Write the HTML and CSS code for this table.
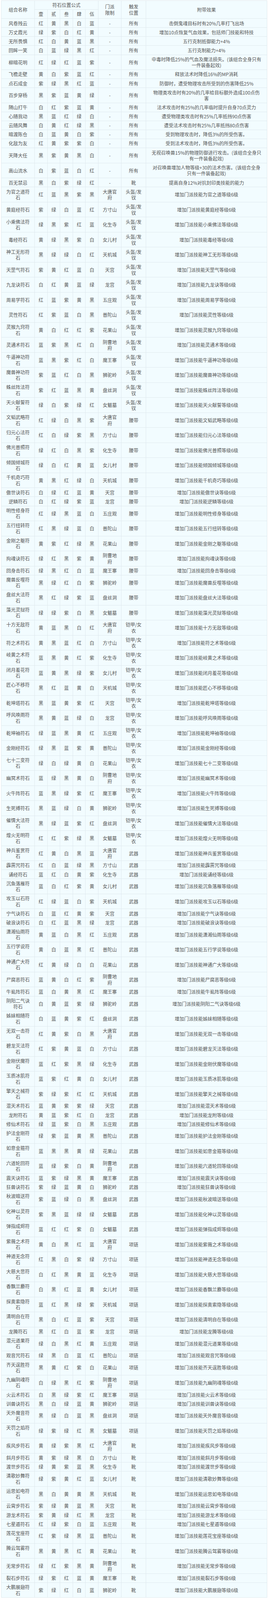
FILE: index.html
```html
<!DOCTYPE html>
<html lang="zh-CN">
<head>
<meta charset="utf-8">
<title>符石组合</title>
<link rel="stylesheet" href="styles.css">
</head>
<body>
<div class="wrap">
<table class="rune">
<colgroup>
<col class="c-name"><col class="c-pos"><col class="c-pos"><col class="c-pos"><col class="c-pos"><col class="c-pos"><col class="c-sect"><col class="c-trig"><col class="c-eff">
</colgroup>
<thead>
<tr><th rowspan="2" class="name">组合名称</th><th colspan="5">符石位置公式</th><th rowspan="2" class="sect">门派<br>限制</th><th rowspan="2" class="trig">触发<br>位置</th><th rowspan="2" class="eff">附带效果</th></tr>
<tr><th>壹</th><th>贰</th><th>叁</th><th>肆</th><th>伍</th></tr>
</thead>
<tbody>
<tr><td class="name">风卷残云</td><td>红</td><td>黄</td><td>黑</td><td>白</td><td>蓝</td><td class="sect">-</td><td class="trig">所有</td><td class="eff">击倒鬼魂目标时有20%几率打飞出场</td></tr>
<tr><td class="name">万丈霞光</td><td>绿</td><td>紫</td><td>白</td><td>红</td><td>黄</td><td class="sect">-</td><td class="trig">所有</td><td class="eff">增加10点恢复气血效果，包括师门技能和特技</td></tr>
<tr><td class="name">无所畏惧</td><td>红</td><td>白</td><td>黄</td><td>蓝</td><td>黑</td><td class="sect">-</td><td class="trig">所有</td><td class="eff">五行克制抵御能力+4%</td></tr>
<tr><td class="name">回眸一笑</td><td>白</td><td>蓝</td><td>绿</td><td>黑</td><td>红</td><td class="sect">-</td><td class="trig">所有</td><td class="eff">五行克制能力+4%</td></tr>
<tr><td class="name">柳暗花明</td><td>红</td><td>绿</td><td>红</td><td>蓝</td><td>紫</td><td class="sect">-</td><td class="trig">所有</td><td class="eff">中毒时降低25%的气血及魔法损失。(该组合全身只有一件装备起效)</td></tr>
<tr><td class="name">飞檐走壁</td><td>黄</td><td>白</td><td>紫</td><td>蓝</td><td>红</td><td class="sect">-</td><td class="trig">所有</td><td class="eff">释放法术时降低16%的MP消耗</td></tr>
<tr><td class="name">点石成金</td><td>紫</td><td>绿</td><td>黑</td><td>红</td><td>蓝</td><td class="sect">-</td><td class="trig">所有</td><td class="eff">防御时，遭受物理攻击所受到的伤害降低25%</td></tr>
<tr><td class="name">百步穿杨</td><td>黑</td><td>紫</td><td>蓝</td><td>黄</td><td>绿</td><td class="sect">-</td><td class="trig">所有</td><td class="eff">物理类攻击时有20%的几率给目标额外造成100点伤害</td></tr>
<tr><td class="name">隔山打牛</td><td>白</td><td>红</td><td>紫</td><td>蓝</td><td>黄</td><td class="sect">-</td><td class="trig">所有</td><td class="eff">法术攻击时有25%的几率临时提升自身70点灵力</td></tr>
<tr><td class="name">心随我动</td><td>黑</td><td>蓝</td><td>红</td><td>绿</td><td>白</td><td class="sect">-</td><td class="trig">所有</td><td class="eff">遭受物理类攻击时有25%几率抵挡90点伤害</td></tr>
<tr><td class="name">云随风舞</td><td>白</td><td>黄</td><td>红</td><td>绿</td><td>黑</td><td class="sect">-</td><td class="trig">所有</td><td class="eff">遭受法术攻击时有25%几率抵挡80点伤害</td></tr>
<tr><td class="name">暗渡陈仓</td><td>白</td><td>蓝</td><td>黄</td><td>白</td><td>紫</td><td class="sect">-</td><td class="trig">所有</td><td class="eff">受到物理攻击时，降低3%的所受伤害。</td></tr>
<tr><td class="name">化敌为友</td><td>红</td><td>黄</td><td>紫</td><td>紫</td><td>白</td><td class="sect">-</td><td class="trig">所有</td><td class="eff">受到法术攻击时，降低3%的所受伤害。</td></tr>
<tr><td class="name">天降大任</td><td>黑</td><td>紫</td><td>黄</td><td>黑</td><td>白</td><td class="sect">-</td><td class="trig">所有</td><td class="eff">无视召唤兽15%的物理防御进行攻击。(该组合全身只有一件装备起效)</td></tr>
<tr><td class="name">高山流水</td><td>白</td><td>紫</td><td>蓝</td><td>白</td><td>红</td><td class="sect">-</td><td class="trig">所有</td><td class="eff">对召唤兽增加人物等级+30的法术伤害。(该组合全身只有一件装备起效)</td></tr>
<tr><td class="name">百无禁忌</td><td>黑</td><td>白</td><td>紫</td><td>绿</td><td>红</td><td class="sect">-</td><td class="trig">靴</td><td class="eff">提高自身12%对抗封印类技能的能力</td></tr>
<tr><td class="name">为官之道符石</td><td>红</td><td>蓝</td><td>黑</td><td>紫</td><td>黑</td><td class="sect">大唐官府</td><td class="trig">头盔/发钗</td><td class="eff">增加门派技能为官之道等级6级</td></tr>
<tr><td class="name">黄庭经符石</td><td>紫</td><td>绿</td><td>白</td><td>蓝</td><td>红</td><td class="sect">方寸山</td><td class="trig">头盔/发钗</td><td class="eff">增加门派技能黄庭经等级6级</td></tr>
<tr><td class="name">小乘佛法符石</td><td>绿</td><td>黑</td><td>紫</td><td>红</td><td>蓝</td><td class="sect">化生寺</td><td class="trig">头盔/发钗</td><td class="eff">增加门派技能小乘佛法等级6级</td></tr>
<tr><td class="name">毒经符石</td><td>黄</td><td>绿</td><td>黑</td><td>紫</td><td>白</td><td class="sect">女儿村</td><td class="trig">头盔/发钗</td><td class="eff">增加门派技能毒经等级6级</td></tr>
<tr><td class="name">神工无形符石</td><td>黑</td><td>绿</td><td>绿</td><td>白</td><td>红</td><td class="sect">天机城</td><td class="trig">头盔/发钗</td><td class="eff">增加门派技能神工无形等级6级</td></tr>
<tr><td class="name">天罡气符石</td><td>紫</td><td>黄</td><td>红</td><td>蓝</td><td>白</td><td class="sect">天宫</td><td class="trig">头盔/发钗</td><td class="eff">增加门派技能天罡气等级6级</td></tr>
<tr><td class="name">九龙诀符石</td><td>白</td><td>红</td><td>黄</td><td>蓝</td><td>绿</td><td class="sect">龙宫</td><td class="trig">头盔/发钗</td><td class="eff">增加门派技能九龙诀等级6级</td></tr>
<tr><td class="name">周易学符石</td><td>红</td><td>蓝</td><td>紫</td><td>黄</td><td>黑</td><td class="sect">五庄观</td><td class="trig">头盔/发钗</td><td class="eff">增加门派技能周易学等级6级</td></tr>
<tr><td class="name">灵性符石</td><td>红</td><td>紫</td><td>蓝</td><td>白</td><td>黑</td><td class="sect">普陀山</td><td class="trig">头盔/发钗</td><td class="eff">增加门派技能灵性等级6级</td></tr>
<tr><td class="name">灵猴九窍符石</td><td>黄</td><td>白</td><td>红</td><td>红</td><td>紫</td><td class="sect">花果山</td><td class="trig">头盔/发钗</td><td class="eff">增加门派技能灵猴九窍等级6级</td></tr>
<tr><td class="name">灵通术符石</td><td>蓝</td><td>紫</td><td>黑</td><td>红</td><td>白</td><td class="sect">阴曹地府</td><td class="trig">头盔/发钗</td><td class="eff">增加门派技能灵通术等级6级</td></tr>
<tr><td class="name">牛逼神功符石</td><td>蓝</td><td>黑</td><td>紫</td><td>红</td><td>白</td><td class="sect">魔王寨</td><td class="trig">头盔/发钗</td><td class="eff">增加门派技能牛逼神功等级6级</td></tr>
<tr><td class="name">魔兽神功符石</td><td>紫</td><td>蓝</td><td>红</td><td>白</td><td>黑</td><td class="sect">狮驼岭</td><td class="trig">头盔/发钗</td><td class="eff">增加门派技能魔兽神功等级6级</td></tr>
<tr><td class="name">蛛丝阵法符石</td><td>紫</td><td>红</td><td>蓝</td><td>黑</td><td>黄</td><td class="sect">盘丝洞</td><td class="trig">头盔/发钗</td><td class="eff">增加门派技能蛛丝阵法等级6级</td></tr>
<tr><td class="name">天火献誓符石</td><td>绿</td><td>白</td><td>紫</td><td>绿</td><td>红</td><td class="sect">女魃墓</td><td class="trig">头盔/发钗</td><td class="eff">增加门派技能天火献誓等级6级</td></tr>
<tr><td class="name">文韬武略符石</td><td>红</td><td>绿</td><td>白</td><td>黑</td><td>紫</td><td class="sect">大唐官府</td><td class="trig">腰带</td><td class="eff">增加门派技能文韬武略等级6级</td></tr>
<tr><td class="name">归元心法符石</td><td>红</td><td>白</td><td>绿</td><td>紫</td><td>黑</td><td class="sect">方寸山</td><td class="trig">腰带</td><td class="eff">增加门派技能归元心法等级6级</td></tr>
<tr><td class="name">佛光普照符石</td><td>绿</td><td>红</td><td>白</td><td>黑</td><td>紫</td><td class="sect">化生寺</td><td class="trig">腰带</td><td class="eff">增加门派技能佛光普照等级6级</td></tr>
<tr><td class="name">倾国倾城符石</td><td>绿</td><td>白</td><td>红</td><td>黄</td><td>蓝</td><td class="sect">女儿村</td><td class="trig">腰带</td><td class="eff">增加门派技能倾国倾城等级6级</td></tr>
<tr><td class="name">千机奇巧符石</td><td>黄</td><td>黑</td><td>红</td><td>绿</td><td>白</td><td class="sect">天机城</td><td class="trig">腰带</td><td class="eff">增加门派技能千机奇巧等级6级</td></tr>
<tr><td class="name">傲世诀符石</td><td>白</td><td>绿</td><td>红</td><td>蓝</td><td>黄</td><td class="sect">天宫</td><td class="trig">腰带</td><td class="eff">增加门派技能傲世诀等级6级</td></tr>
<tr><td class="name">逆鳞符石</td><td>白</td><td>红</td><td>绿</td><td>紫</td><td>蓝</td><td class="sect">龙宫</td><td class="trig">腰带</td><td class="eff">增加门派技能逆鳞等级6级</td></tr>
<tr><td class="name">明性修身符石</td><td>红</td><td>绿</td><td>黑</td><td>蓝</td><td>白</td><td class="sect">五庄观</td><td class="trig">腰带</td><td class="eff">增加门派技能明性修身等级6级</td></tr>
<tr><td class="name">五行扭转符石</td><td>红</td><td>黑</td><td>绿</td><td>蓝</td><td>白</td><td class="sect">普陀山</td><td class="trig">腰带</td><td class="eff">增加门派技能五行扭转等级6级</td></tr>
<tr><td class="name">金刚之躯符石</td><td>黄</td><td>紫</td><td>红</td><td>绿</td><td>黑</td><td class="sect">花果山</td><td class="trig">腰带</td><td class="eff">增加门派技能金刚之躯等级6级</td></tr>
<tr><td class="name">拘魂诀符石</td><td>绿</td><td>红</td><td>黑</td><td>紫</td><td>黄</td><td class="sect">阴曹地府</td><td class="trig">腰带</td><td class="eff">增加门派技能拘魂诀等级6级</td></tr>
<tr><td class="name">回身击符石</td><td>绿</td><td>黑</td><td>红</td><td>白</td><td>蓝</td><td class="sect">魔王寨</td><td class="trig">腰带</td><td class="eff">增加门派技能回身击等级6级</td></tr>
<tr><td class="name">魔兽反噬符石</td><td>黑</td><td>绿</td><td>红</td><td>白</td><td>紫</td><td class="sect">狮驼岭</td><td class="trig">腰带</td><td class="eff">增加门派技能魔兽反噬等级6级</td></tr>
<tr><td class="name">盘丝大法符石</td><td>黑</td><td>红</td><td>绿</td><td>紫</td><td>蓝</td><td class="sect">盘丝洞</td><td class="trig">腰带</td><td class="eff">增加门派技能盘丝大法等级6级</td></tr>
<tr><td class="name">藻光灵狱符石</td><td>绿</td><td>绿</td><td>紫</td><td>白</td><td>黑</td><td class="sect">女魃墓</td><td class="trig">腰带</td><td class="eff">增加门派技能藻光灵狱等级6级</td></tr>
<tr><td class="name">十方无敌符石</td><td>黄</td><td>蓝</td><td>黑</td><td>白</td><td>红</td><td class="sect">大唐官府</td><td class="trig">铠甲/女衣</td><td class="eff">增加门派技能十方无敌等级6级</td></tr>
<tr><td class="name">符之术符石</td><td>黄</td><td>黑</td><td>蓝</td><td>红</td><td>白</td><td class="sect">方寸山</td><td class="trig">铠甲/女衣</td><td class="eff">增加门派技能符之术等级6级</td></tr>
<tr><td class="name">岐黄之术符石</td><td>蓝</td><td>黑</td><td>黄</td><td>红</td><td>紫</td><td class="sect">化生寺</td><td class="trig">铠甲/女衣</td><td class="eff">增加门派技能岐黄之术等级6级</td></tr>
<tr><td class="name">闭月羞花符石</td><td>蓝</td><td>黄</td><td>黑</td><td>绿</td><td>紫</td><td class="sect">女儿村</td><td class="trig">铠甲/女衣</td><td class="eff">增加门派技能闭月羞花等级6级</td></tr>
<tr><td class="name">匠心不移符石</td><td>黑</td><td>红</td><td>蓝</td><td>黄</td><td>白</td><td class="sect">天机城</td><td class="trig">铠甲/女衣</td><td class="eff">增加门派技能匠心不移等级6级</td></tr>
<tr><td class="name">乾坤塔符石</td><td>黑</td><td>蓝</td><td>黄</td><td>紫</td><td>红</td><td class="sect">天宫</td><td class="trig">铠甲/女衣</td><td class="eff">增加门派技能乾坤塔等级6级</td></tr>
<tr><td class="name">呼风唤雨符石</td><td>黑</td><td>黄</td><td>蓝</td><td>绿</td><td>白</td><td class="sect">龙宫</td><td class="trig">铠甲/女衣</td><td class="eff">增加门派技能呼风唤雨等级6级</td></tr>
<tr><td class="name">乾坤袖符石</td><td>绿</td><td>蓝</td><td>黑</td><td>黄</td><td>红</td><td class="sect">五庄观</td><td class="trig">铠甲/女衣</td><td class="eff">增加门派技能乾坤袖等级6级</td></tr>
<tr><td class="name">金刚经符石</td><td>绿</td><td>黑</td><td>蓝</td><td>紫</td><td>黄</td><td class="sect">普陀山</td><td class="trig">铠甲/女衣</td><td class="eff">增加门派技能金刚经等级6级</td></tr>
<tr><td class="name">七十二变符石</td><td>绿</td><td>白</td><td>绿</td><td>黄</td><td>白</td><td class="sect">花果山</td><td class="trig">铠甲/女衣</td><td class="eff">增加门派技能七十二变等级6级</td></tr>
<tr><td class="name">幽冥术符石</td><td>蓝</td><td>绿</td><td>黑</td><td>黄</td><td>白</td><td class="sect">阴曹地府</td><td class="trig">铠甲/女衣</td><td class="eff">增加门派技能幽冥术等级6级</td></tr>
<tr><td class="name">火牛阵符石</td><td>蓝</td><td>黑</td><td>绿</td><td>紫</td><td>红</td><td class="sect">魔王寨</td><td class="trig">铠甲/女衣</td><td class="eff">增加门派技能火牛阵等级6级</td></tr>
<tr><td class="name">生死搏符石</td><td>黑</td><td>蓝</td><td>绿</td><td>白</td><td>黄</td><td class="sect">狮驼岭</td><td class="trig">铠甲/女衣</td><td class="eff">增加门派技能生死搏等级6级</td></tr>
<tr><td class="name">催情大法符石</td><td>黑</td><td>绿</td><td>蓝</td><td>紫</td><td>红</td><td class="sect">盘丝洞</td><td class="trig">铠甲/女衣</td><td class="eff">增加门派技能催情大法等级6级</td></tr>
<tr><td class="name">煌火无明符石</td><td>红</td><td>红</td><td>紫</td><td>绿</td><td>黑</td><td class="sect">女魃墓</td><td class="trig">铠甲/女衣</td><td class="eff">增加门派技能煌火无明等级6级</td></tr>
<tr><td class="name">神兵鉴赏符石</td><td>红</td><td>黄</td><td>白</td><td>黑</td><td>蓝</td><td class="sect">大唐官府</td><td class="trig">武器</td><td class="eff">增加门派技能神兵鉴赏等级6级</td></tr>
<tr><td class="name">霹雳咒符石</td><td>红</td><td>白</td><td>蓝</td><td>绿</td><td>黑</td><td class="sect">方寸山</td><td class="trig">武器</td><td class="eff">增加门派技能霹雳咒等级6级</td></tr>
<tr><td class="name">诵经符石</td><td>蓝</td><td>红</td><td>白</td><td>黄</td><td>紫</td><td class="sect">化生寺</td><td class="trig">武器</td><td class="eff">增加门派技能诵经等级6级</td></tr>
<tr><td class="name">沉鱼落雁符石</td><td>蓝</td><td>白</td><td>红</td><td>紫</td><td>黄</td><td class="sect">女儿村</td><td class="trig">武器</td><td class="eff">增加门派技能沉鱼落雁等级6级</td></tr>
<tr><td class="name">攻玉以石符石</td><td>红</td><td>绿</td><td>蓝</td><td>白</td><td>紫</td><td class="sect">天机城</td><td class="trig">武器</td><td class="eff">增加门派技能攻玉以石等级6级</td></tr>
<tr><td class="name">宁气诀符石</td><td>白</td><td>蓝</td><td>红</td><td>黄</td><td>紫</td><td class="sect">天宫</td><td class="trig">武器</td><td class="eff">增加门派技能宁气诀等级6级</td></tr>
<tr><td class="name">破浪诀符石</td><td>白</td><td>红</td><td>蓝</td><td>黑</td><td>绿</td><td class="sect">龙宫</td><td class="trig">武器</td><td class="eff">增加门派技能破浪诀等级6级</td></tr>
<tr><td class="name">潇湘仙雨符石</td><td>黄</td><td>蓝</td><td>白</td><td>黑</td><td>红</td><td class="sect">五庄观</td><td class="trig">武器</td><td class="eff">增加门派技能潇湘仙雨等级6级</td></tr>
<tr><td class="name">五行学说符石</td><td>黄</td><td>白</td><td>蓝</td><td>黑</td><td>红</td><td class="sect">普陀山</td><td class="trig">武器</td><td class="eff">增加门派技能五行学说等级6级</td></tr>
<tr><td class="name">神通广大符石</td><td>红</td><td>黄</td><td>绿</td><td>白</td><td>白</td><td class="sect">花果山</td><td class="trig">武器</td><td class="eff">增加门派技能神通广大等级6级</td></tr>
<tr><td class="name">尸腐恶符石</td><td>蓝</td><td>黄</td><td>白</td><td>红</td><td>紫</td><td class="sect">阴曹地府</td><td class="trig">武器</td><td class="eff">增加门派技能尸腐恶等级6级</td></tr>
<tr><td class="name">牛虱阵符石</td><td>蓝</td><td>白</td><td>黄</td><td>黑</td><td>红</td><td class="sect">魔王寨</td><td class="trig">武器</td><td class="eff">增加门派技能牛虱阵等级6级</td></tr>
<tr><td class="name">阴阳二气诀符石</td><td>白</td><td>黄</td><td>蓝</td><td>紫</td><td>绿</td><td class="sect">狮驼岭</td><td class="trig">武器</td><td class="eff">增加门派技能阴阳二气诀等级6级</td></tr>
<tr><td class="name">姊妹相随符石</td><td>白</td><td>蓝</td><td>黄</td><td>紫</td><td>红</td><td class="sect">盘丝洞</td><td class="trig">武器</td><td class="eff">增加门派技能姊妹相随等级6级</td></tr>
<tr><td class="name">无双一击符石</td><td>红</td><td>黄</td><td>紫</td><td>白</td><td>黑</td><td class="sect">大唐官府</td><td class="trig">武器</td><td class="eff">增加门派技能无双一击等级6级</td></tr>
<tr><td class="name">碧龙灭法符石</td><td>红</td><td>紫</td><td>黄</td><td>蓝</td><td>白</td><td class="sect">方寸山</td><td class="trig">武器</td><td class="eff">增加门派技能碧龙灭法等级6级</td></tr>
<tr><td class="name">金刚伏魔符石</td><td>蓝</td><td>红</td><td>紫</td><td>黑</td><td>绿</td><td class="sect">化生寺</td><td class="trig">武器</td><td class="eff">增加门派技能金刚伏魔等级6级</td></tr>
<tr><td class="name">玉质冰肌符石</td><td>蓝</td><td>紫</td><td>红</td><td>黄</td><td>白</td><td class="sect">女儿村</td><td class="trig">武器</td><td class="eff">增加门派技能玉质冰肌等级6级</td></tr>
<tr><td class="name">擎天之械符石</td><td>紫</td><td>绿</td><td>紫</td><td>红</td><td>红</td><td class="sect">天机城</td><td class="trig">武器</td><td class="eff">增加门派技能擎天之械等级6级</td></tr>
<tr><td class="name">混天术符石</td><td>蓝</td><td>黄</td><td>紫</td><td>紫</td><td>绿</td><td class="sect">天宫</td><td class="trig">武器</td><td class="eff">增加门派技能混天术等级6级</td></tr>
<tr><td class="name">龙附符石</td><td>黄</td><td>蓝</td><td>紫</td><td>红</td><td>白</td><td class="sect">龙宫</td><td class="trig">武器</td><td class="eff">增加门派技能龙附等级6级</td></tr>
<tr><td class="name">修仙术符石</td><td>绿</td><td>蓝</td><td>紫</td><td>白</td><td>黑</td><td class="sect">五庄观</td><td class="trig">武器</td><td class="eff">增加门派技能修仙术等级6级</td></tr>
<tr><td class="name">护法金刚符石</td><td>绿</td><td>紫</td><td>蓝</td><td>黄</td><td>黑</td><td class="sect">普陀山</td><td class="trig">武器</td><td class="eff">增加门派技能护法金刚等级6级</td></tr>
<tr><td class="name">如意金箍符石</td><td>蓝</td><td>黑</td><td>黑</td><td>黄</td><td>绿</td><td class="sect">花果山</td><td class="trig">武器</td><td class="eff">增加门派技能如意金箍等级6级</td></tr>
<tr><td class="name">六道轮回符石</td><td>蓝</td><td>绿</td><td>紫</td><td>白</td><td>黄</td><td class="sect">阴曹地府</td><td class="trig">武器</td><td class="eff">增加门派技能六道轮回等级6级</td></tr>
<tr><td class="name">震天诀符石</td><td>蓝</td><td>紫</td><td>绿</td><td>黑</td><td>黄</td><td class="sect">魔王寨</td><td class="trig">武器</td><td class="eff">增加门派技能震天诀等级6级</td></tr>
<tr><td class="name">狂兽诀符石</td><td>紫</td><td>绿</td><td>蓝</td><td>黄</td><td>白</td><td class="sect">狮驼岭</td><td class="trig">武器</td><td class="eff">增加门派技能狂兽诀等级6级</td></tr>
<tr><td class="name">秋波暗送符石</td><td>紫</td><td>蓝</td><td>绿</td><td>白</td><td>黑</td><td class="sect">盘丝洞</td><td class="trig">武器</td><td class="eff">增加门派技能秋波暗送等级6级</td></tr>
<tr><td class="name">化神以灵符石</td><td>紫</td><td>黑</td><td>蓝</td><td>绿</td><td>绿</td><td class="sect">女魃墓</td><td class="trig">武器</td><td class="eff">增加门派技能化神以灵等级6级</td></tr>
<tr><td class="name">弹指成烬符石</td><td>蓝</td><td>红</td><td>红</td><td>紫</td><td>白</td><td class="sect">女魃墓</td><td class="trig">武器</td><td class="eff">增加门派技能弹指成烬等级6级</td></tr>
<tr><td class="name">紫薇之术符石</td><td>黄</td><td>白</td><td>黑</td><td>红</td><td>蓝</td><td class="sect">大唐官府</td><td class="trig">项链</td><td class="eff">增加门派技能紫薇之术等级6级</td></tr>
<tr><td class="name">神道无念符石</td><td>红</td><td>黑</td><td>白</td><td>紫</td><td>绿</td><td class="sect">方寸山</td><td class="trig">项链</td><td class="eff">增加门派技能神道无念等级6级</td></tr>
<tr><td class="name">大慈大悲符石</td><td>白</td><td>红</td><td>黑</td><td>黄</td><td>蓝</td><td class="sect">化生寺</td><td class="trig">项链</td><td class="eff">增加门派技能大慈大悲等级6级</td></tr>
<tr><td class="name">香飘兰麝符石</td><td>白</td><td>黑</td><td>红</td><td>蓝</td><td>黄</td><td class="sect">女儿村</td><td class="trig">项链</td><td class="eff">增加门派技能香飘兰麝等级6级</td></tr>
<tr><td class="name">探奥索隐符石</td><td>蓝</td><td>红</td><td>黑</td><td>绿</td><td>紫</td><td class="sect">天机城</td><td class="trig">项链</td><td class="eff">增加门派技能探奥索隐等级6级</td></tr>
<tr><td class="name">清明自在符石</td><td>黑</td><td>白</td><td>红</td><td>蓝</td><td>紫</td><td class="sect">天宫</td><td class="trig">项链</td><td class="eff">增加门派技能清明自在等级6级</td></tr>
<tr><td class="name">龙腾符石</td><td>黑</td><td>红</td><td>白</td><td>蓝</td><td>紫</td><td class="sect">龙宫</td><td class="trig">项链</td><td class="eff">增加门派技能龙腾等级6级</td></tr>
<tr><td class="name">混元道果符石</td><td>绿</td><td>白</td><td>黑</td><td>红</td><td>黄</td><td class="sect">五庄观</td><td class="trig">项链</td><td class="eff">增加门派技能混元道果等级6级</td></tr>
<tr><td class="name">观音咒符石</td><td>绿</td><td>黑</td><td>白</td><td>蓝</td><td>红</td><td class="sect">普陀山</td><td class="trig">项链</td><td class="eff">增加门派技能观音咒等级6级</td></tr>
<tr><td class="name">齐天逞胜符石</td><td>黑</td><td>黄</td><td>红</td><td>紫</td><td>白</td><td class="sect">花果山</td><td class="trig">项链</td><td class="eff">增加门派技能齐天逞胜等级6级</td></tr>
<tr><td class="name">九幽阴魂符石</td><td>白</td><td>绿</td><td>黑</td><td>红</td><td>紫</td><td class="sect">阴曹地府</td><td class="trig">项链</td><td class="eff">增加门派技能九幽阴魂等级6级</td></tr>
<tr><td class="name">火云术符石</td><td>白</td><td>黑</td><td>绿</td><td>紫</td><td>红</td><td class="sect">魔王寨</td><td class="trig">项链</td><td class="eff">增加门派技能火云术等级6级</td></tr>
<tr><td class="name">训兽诀符石</td><td>黑</td><td>白</td><td>绿</td><td>蓝</td><td>黄</td><td class="sect">狮驼岭</td><td class="trig">项链</td><td class="eff">增加门派技能训兽诀等级6级</td></tr>
<tr><td class="name">天外魔音符石</td><td>黑</td><td>绿</td><td>白</td><td>蓝</td><td>黑</td><td class="sect">盘丝洞</td><td class="trig">项链</td><td class="eff">增加门派技能天外魔音等级6级</td></tr>
<tr><td class="name">天罚之焰符石</td><td>绿</td><td>紫</td><td>绿</td><td>红</td><td>黑</td><td class="sect">女魃墓</td><td class="trig">项链</td><td class="eff">增加门派技能天罚之焰等级6级</td></tr>
<tr><td class="name">疾风步符石</td><td>黄</td><td>绿</td><td>紫</td><td>黑</td><td>红</td><td class="sect">大唐官府</td><td class="trig">靴</td><td class="eff">增加门派技能疾风步等级6级</td></tr>
<tr><td class="name">斜月步符石</td><td>黄</td><td>紫</td><td>绿</td><td>黑</td><td>白</td><td class="sect">方寸山</td><td class="trig">靴</td><td class="eff">增加门派技能斜月步等级6级</td></tr>
<tr><td class="name">渡世步符石</td><td>绿</td><td>黄</td><td>紫</td><td>蓝</td><td>黑</td><td class="sect">化生寺</td><td class="trig">靴</td><td class="eff">增加门派技能渡世步等级6级</td></tr>
<tr><td class="name">清歌妙舞符石</td><td>绿</td><td>紫</td><td>黄</td><td>红</td><td>蓝</td><td class="sect">女儿村</td><td class="trig">靴</td><td class="eff">增加门派技能清歌妙舞等级6级</td></tr>
<tr><td class="name">运思如电符石</td><td>黑</td><td>白</td><td>黄</td><td>黄</td><td>黑</td><td class="sect">天机城</td><td class="trig">靴</td><td class="eff">增加门派技能运思如电等级6级</td></tr>
<tr><td class="name">云霄步符石</td><td>紫</td><td>绿</td><td>黄</td><td>蓝</td><td>黑</td><td class="sect">天宫</td><td class="trig">靴</td><td class="eff">增加门派技能云霄步等级6级</td></tr>
<tr><td class="name">游龙术符石</td><td>紫</td><td>黄</td><td>绿</td><td>红</td><td>黑</td><td class="sect">龙宫</td><td class="trig">靴</td><td class="eff">增加门派技能游龙术等级6级</td></tr>
<tr><td class="name">七星遁符石</td><td>红</td><td>绿</td><td>紫</td><td>白</td><td>蓝</td><td class="sect">五庄观</td><td class="trig">靴</td><td class="eff">增加门派技能七星遁等级6级</td></tr>
<tr><td class="name">莲花宝座符石</td><td>红</td><td>紫</td><td>绿</td><td>黑</td><td>蓝</td><td class="sect">普陀山</td><td class="trig">靴</td><td class="eff">增加门派技能莲花宝座等级6级</td></tr>
<tr><td class="name">腾云驾雾符石</td><td>黑</td><td>黄</td><td>黑</td><td>红</td><td>黄</td><td class="sect">花果山</td><td class="trig">靴</td><td class="eff">增加门派技能腾云驾雾等级6级</td></tr>
<tr><td class="name">无常步符石</td><td>绿</td><td>红</td><td>紫</td><td>黑</td><td>黄</td><td class="sect">阴曹地府</td><td class="trig">靴</td><td class="eff">增加门派技能无常步等级6级</td></tr>
<tr><td class="name">裂石步符石</td><td>绿</td><td>紫</td><td>红</td><td>蓝</td><td>黄</td><td class="sect">魔王寨</td><td class="trig">靴</td><td class="eff">增加门派技能裂石步等级6级</td></tr>
<tr><td class="name">大鹏展翅符石</td><td>紫</td><td>绿</td><td>红</td><td>白</td><td>蓝</td><td class="sect">狮驼岭</td><td class="trig">靴</td><td class="eff">增加门派技能大鹏展翅等级6级</td></tr>
</tbody>
</table>
</div>
</body>
</html>
```

FILE: styles.css
```css
html, body {
  margin: 0;
  padding: 0;
  background: #ffffff;
}

.wrap {
  padding: 1px 3px 0 3px;
}

.rune {
  border-collapse: collapse;
  table-layout: fixed;
  width: 680px;
  background: #f2fcff;
  color: #555555;
  font-family: "Noto Sans CJK SC", "Microsoft YaHei", sans-serif;
  font-size: 12px;
  line-height: 15.4px;
}

.c-name { width: 85px; }
.c-pos { width: 32.6px; }
.c-sect { width: 59px; }
.c-trig { width: 63px; }
.c-eff { width: 310px; }

.rune th,
.rune td {
  border: 1px solid #dfe9ee;
  padding: 3.35px 0;
  text-align: center;
  vertical-align: middle;
  font-weight: normal;
}

.rune .name { padding-left: 7px; padding-right: 7px; }
.rune .sect { padding-left: 6px; padding-right: 6px; }
.rune .trig { padding-left: 6px; padding-right: 6px; }
.rune .eff { padding-left: 14px; padding-right: 14px; }
```
